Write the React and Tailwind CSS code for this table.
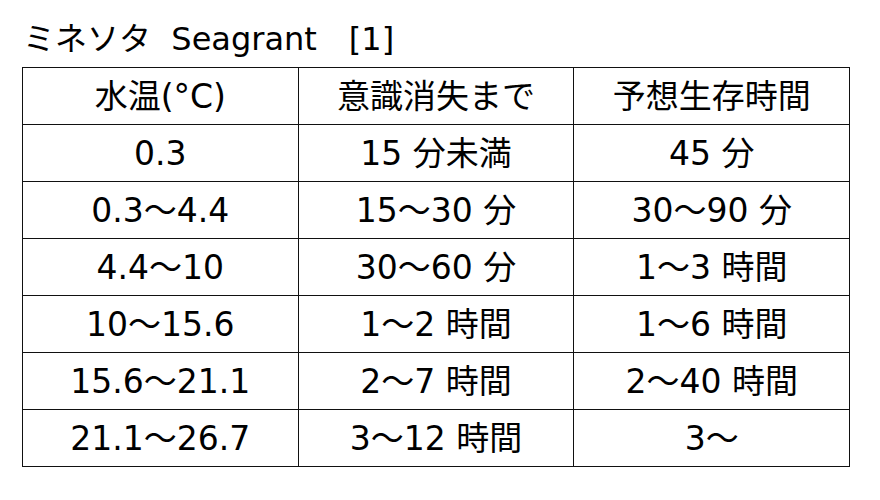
export default function App() {
  const header = ["水温(°C)", "意識消失まで", "予想生存時間"];
  const rows = [
    ["0.3", "15 分未満", "45 分"],
    ["0.3～4.4", "15～30 分", "30～90 分"],
    ["4.4～10", "30～60 分", "1～3 時間"],
    ["10～15.6", "1～2 時間", "1～6 時間"],
    ["15.6～21.1", "2～7 時間", "2～40 時間"],
    ["21.1～26.7", "3～12 時間", "3～"],
  ];
  const font = { fontFamily: '"DejaVu Sans", "Noto Sans CJK JP", sans-serif' };
  return (
    <div className="w-[880px] h-[500px] bg-white text-black" style={font}>
      <div className="pt-[19px] pl-[23px] text-[32px] leading-[40px] h-[67px] whitespace-pre">
        {"ミネソタ  Seagrant　[1]"}
      </div>
      <table className="ml-[22px] w-[828px] border-collapse table-fixed">
        <tbody>
          {[header, ...rows].map((r, i) => (
            <tr key={i} className="h-[57px]">
              {r.map((c, j) => (
                <td
                  key={j}
                  className="border-[1.5px] border-[#111] text-center text-[33px] leading-none p-0 align-middle"
                >
                  {c}
                </td>
              ))}
            </tr>
          ))}
        </tbody>
      </table>
    </div>
  );
}
